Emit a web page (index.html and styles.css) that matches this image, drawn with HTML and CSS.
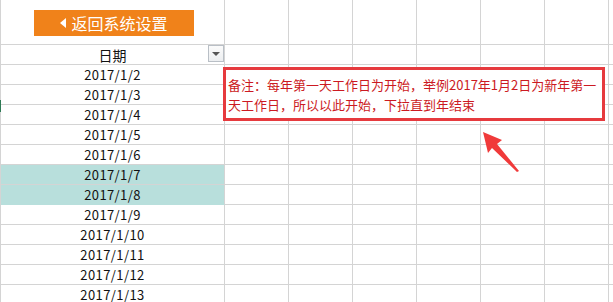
FILE: index.html
```html
<!DOCTYPE html>
<html>
<head>
<meta charset="utf-8">
<link rel="stylesheet" href="styles.css">
</head>
<body>
<div class="sheet">
  <div class="cell first top"><div class="back-btn"><span class="tri"></span>返回系统设置</div></div>
  <div class="cell top"></div><div class="cell top"></div><div class="cell top"></div><div class="cell top"></div><div class="cell top"></div><div class="cell top"></div><div class="cell top last"></div>

  <div class="cell first head">日期<span class="filter"><span class="ftri"></span></span></div>
  <div class="cell"></div><div class="cell"></div><div class="cell"></div><div class="cell"></div><div class="cell"></div><div class="cell"></div><div class="cell last"></div>

  <div class="cell first date">2017/1/2</div>
  <div class="cell"></div><div class="cell"></div><div class="cell"></div><div class="cell"></div><div class="cell"></div><div class="cell"></div><div class="cell last"></div>
  <div class="cell first date">2017/1/3</div>
  <div class="cell"></div><div class="cell"></div><div class="cell"></div><div class="cell"></div><div class="cell"></div><div class="cell"></div><div class="cell last"></div>
  <div class="cell first date">2017/1/4</div>
  <div class="cell"></div><div class="cell"></div><div class="cell"></div><div class="cell"></div><div class="cell"></div><div class="cell"></div><div class="cell last"></div>
  <div class="cell first date">2017/1/5</div>
  <div class="cell"></div><div class="cell"></div><div class="cell"></div><div class="cell"></div><div class="cell"></div><div class="cell"></div><div class="cell last"></div>
  <div class="cell first date">2017/1/6</div>
  <div class="cell"></div><div class="cell"></div><div class="cell"></div><div class="cell"></div><div class="cell"></div><div class="cell"></div><div class="cell last"></div>
  <div class="cell first date hl">2017/1/7</div>
  <div class="cell"></div><div class="cell"></div><div class="cell"></div><div class="cell"></div><div class="cell"></div><div class="cell"></div><div class="cell last"></div>
  <div class="cell first date hl nob">2017/1/8</div>
  <div class="cell"></div><div class="cell"></div><div class="cell"></div><div class="cell"></div><div class="cell"></div><div class="cell"></div><div class="cell last"></div>
  <div class="cell first date">2017/1/9</div>
  <div class="cell"></div><div class="cell"></div><div class="cell"></div><div class="cell"></div><div class="cell"></div><div class="cell"></div><div class="cell last"></div>
  <div class="cell first date">2017/1/10</div>
  <div class="cell"></div><div class="cell"></div><div class="cell"></div><div class="cell"></div><div class="cell"></div><div class="cell"></div><div class="cell last"></div>
  <div class="cell first date">2017/1/11</div>
  <div class="cell"></div><div class="cell"></div><div class="cell"></div><div class="cell"></div><div class="cell"></div><div class="cell"></div><div class="cell last"></div>
  <div class="cell first date">2017/1/12</div>
  <div class="cell"></div><div class="cell"></div><div class="cell"></div><div class="cell"></div><div class="cell"></div><div class="cell"></div><div class="cell last"></div>
  <div class="cell first date">2017/1/13</div>
  <div class="cell"></div><div class="cell"></div><div class="cell"></div><div class="cell"></div><div class="cell"></div><div class="cell"></div><div class="cell last"></div>
</div>
<div class="marker"></div>
<div class="note">备注：每年第一天工作日为开始，举例2017年1月2日为新年第一天工作日，所以以此开始，下拉直到年结束</div>
<svg class="arrow" width="50" height="50" viewBox="0 0 50 50">
  <polygon points="2,2 21,10 16,14 38,41 36,42 11,18 7,23" fill="#f03a3a"/>
</svg>
</body>
</html>
```

FILE: styles.css
```css
html, body {
  margin: 0;
  padding: 0;
  background: #ffffff;
  overflow: hidden;
}
body {
  width: 613px;
  height: 302px;
  position: relative;
  font-family: "Noto Sans CJK SC", "Noto Sans", sans-serif;
}
.sheet {
  display: grid;
  grid-template-columns: 224px repeat(6, 64px) 5px;
  grid-template-rows: 45px repeat(13, 20px);
  border-left: 1px solid #d4d4d4;
}
.cell {
  border-right: 1px solid #d4d4d4;
  border-bottom: 1px solid #d4d4d4;
  box-sizing: border-box;
  min-width: 0;
}
.cell.last {
  border-right: none;
}
.first.top {
  display: flex;
  align-items: center;
  justify-content: flex-start;
  padding-left: 33px;
  padding-top: 1px;
}
.back-btn {
  width: 160px;
  height: 26px;
  background: #f0821a;
  color: #ffffff;
  font-size: 16px;
  display: flex;
  align-items: center;
  justify-content: center;
  gap: 5px;
}
.tri {
  width: 0;
  height: 0;
  border-top: 5px solid transparent;
  border-bottom: 5px solid transparent;
  border-right: 6px solid #ffffff;
}
.head {
  position: relative;
  display: flex;
  align-items: center;
  justify-content: center;
  font-size: 14px;
  color: #111;
}
.filter {
  position: absolute;
  right: 0;
  top: 0;
  width: 16px;
  height: 17px;
  box-sizing: border-box;
  border: 1px solid #b9bfc6;
  background: linear-gradient(#fbfbfb, #eceef0);
  display: flex;
  align-items: center;
  justify-content: center;
}
.ftri {
  width: 0;
  height: 0;
  border-left: 4px solid transparent;
  border-right: 4px solid transparent;
  border-top: 4px solid #555;
}
.date {
  display: flex;
  align-items: center;
  justify-content: center;
  font-size: 13px;
  color: #111;
  letter-spacing: 0.4px;
}
.hl {
  background: #b8dfdc;
}
.hl.nob {
  border-bottom-color: #b8dfdc;
}
.marker {
  position: absolute;
  left: 0;
  top: 100px;
  width: 1px;
  height: 12px;
  background: #2f7a55;
}
.note {
  position: absolute;
  left: 223px;
  top: 67px;
  width: 382px;
  height: 54px;
  box-sizing: border-box;
  border: 3px solid #e63a3e;
  background: #ffffff;
  color: #cc1a22;
  font-size: 13px;
  line-height: 20px;
  padding: 5px 2px 0 2px;
}
.arrow {
  position: absolute;
  left: 481px;
  top: 130px;
}
```
